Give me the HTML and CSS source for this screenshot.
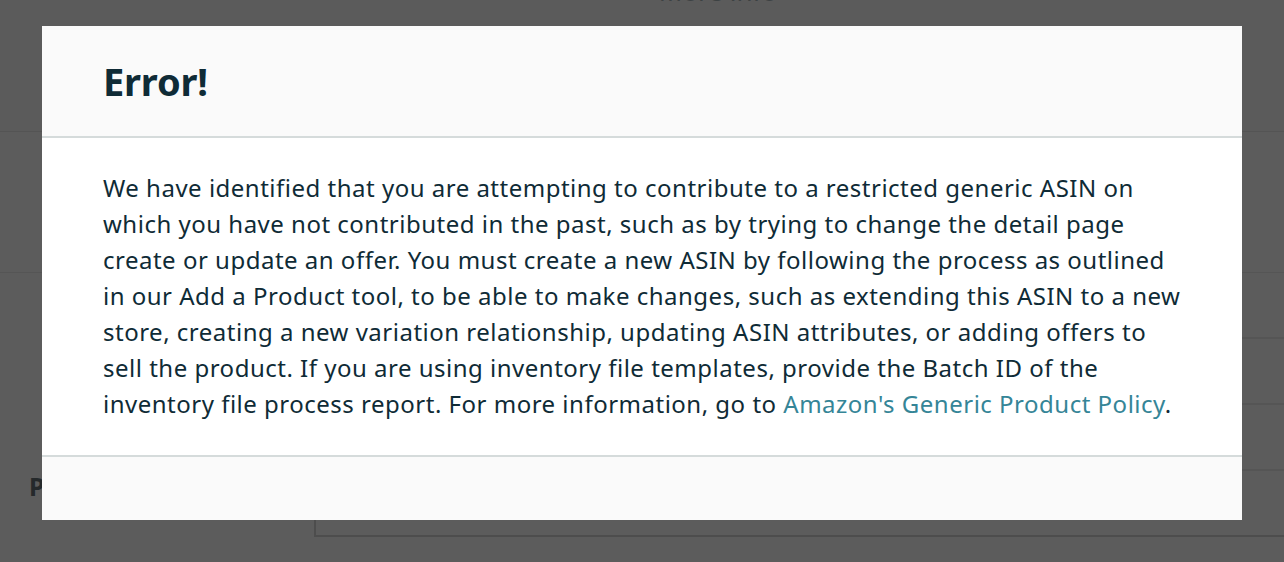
FILE: index.html
```html
<!DOCTYPE html>
<html lang="en">
<head>
  <meta charset="UTF-8">
  <title>Error</title>
  <link rel="stylesheet" href="styles.css">
</head>
<body>
  <!-- Page behind the dialog -->
  <div class="page">
    <div class="page-top">
      <div class="more-info">More info</div>
    </div>
    <div class="page-row"></div>
    <div class="page-form">
      <div class="form-label">P</div>
      <div class="form-box">
        <div class="form-line"></div>
        <div class="form-line"></div>
        <div class="form-line"></div>
        <div class="form-line last"></div>
      </div>
    </div>
  </div>

  <div class="backdrop"></div>

  <!-- Error dialog -->
  <div class="modal">
    <div class="modal-header">
      <h1>Error!</h1>
    </div>
    <div class="modal-body">
      <p>
        We have identified that you are attempting to contribute to a restricted generic ASIN on
        which you have not contributed in the past, such as by trying to change the detail page
        create or update an offer. You must create a new ASIN by following the process as outlined
        in our Add a Product tool, to be able to make changes, such as extending this ASIN to a new
        store, creating a new variation relationship, updating ASIN attributes, or adding offers to
        sell the product. If you are using inventory file templates, provide the Batch ID of the
        inventory file process report. For more information, go to
        <a href="#">Amazon's Generic Product Policy</a>.
      </p>
    </div>
    <div class="modal-footer"></div>
  </div>
</body>
</html>
```

FILE: styles.css
```css
:root {
  --ink: #0f2b36;
  --link: #358597;
  --line: #d5dbdb;
  --soft: #fafafa;
}
body {
  margin: 0;
  font-family: 'Noto Sans', Arial, sans-serif;
  background: #fff;
  color: var(--ink);
  height: 562px;
  overflow: hidden;
}
/* Page underneath */
.page {
  height: 562px;
}
.page-top {
  height: 131px;
  border-bottom: 1px solid #e8e8e8;
  background: #fdfdfd;
  overflow: hidden;
}
.more-info {
  margin: -27px 0 0 152px;
  text-align: center;
  font-size: 26px;
  line-height: 36px;
  color: #a9b7bb;
}
.page-row {
  height: 140px;
  border-bottom: 1px solid #ececec;
}
.page-form {
  display: flex;
}
.form-label {
  width: 314px;
  padding: 198px 0 0 29px;
  font-size: 25px;
  line-height: 30px;
  font-weight: 700;
  color: #687378;
  box-sizing: border-box;
}
.form-box {
  flex: 1;
  border-left: 2px solid #d6d6d6;
  display: flex;
  flex-direction: column;
}
.form-line {
  height: 66px;
  border-bottom: 2px solid #ececec;
  box-sizing: border-box;
}
.form-line.last {
  border-bottom-color: #d6d6d6;
}
.backdrop {
  position: fixed;
  inset: 0;
  background: rgba(0, 0, 0, 0.64);
}
/* Dialog */
.modal {
  position: fixed;
  top: 26px;
  left: 42px;
  width: 1200px;
  height: 494px;
  background: #fff;
  display: flex;
  flex-direction: column;
}
.modal-header {
  background: var(--soft);
  height: 110px;
  border-bottom: 2px solid var(--line);
  padding: 0 61px;
  display: flex;
  align-items: center;
}
.modal-header h1 {
  margin: 0;
  font-size: 38px;
  font-weight: 700;
  letter-spacing: -0.2px;
}
.modal-body {
  flex: 1;
  padding: 32px 61px 0 61px;
}
.modal-body p {
  margin: 0;
  font-size: 24px;
  line-height: 36px;
  letter-spacing: 0.5px;
}
.modal-body a {
  color: var(--link);
  text-decoration: none;
}
.modal-footer {
  height: 63px;
  background: var(--soft);
  border-top: 2px solid var(--line);
}
```
